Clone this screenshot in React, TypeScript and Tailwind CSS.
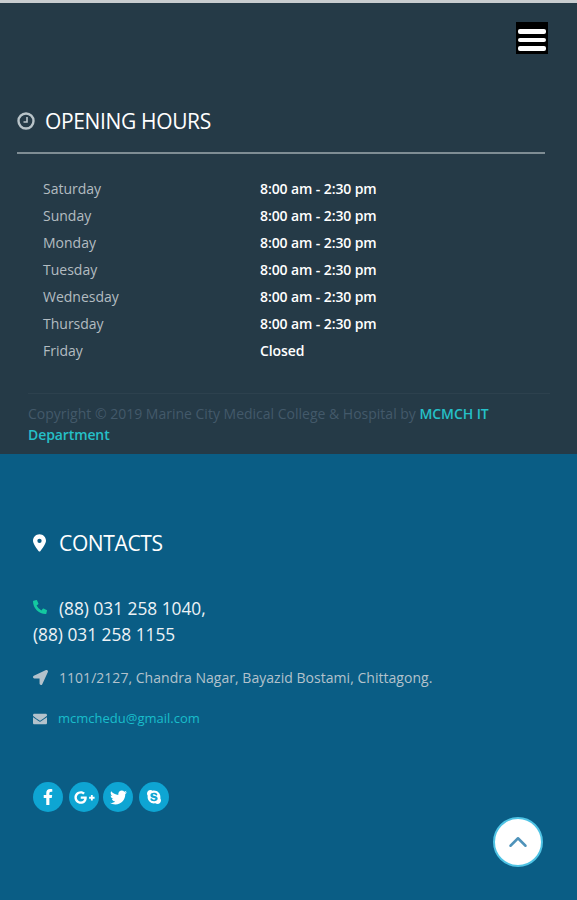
import { FaEnvelope, FaFacebookF, FaGooglePlusG, FaLocationArrow, FaPhoneAlt, FaSkype, FaTwitter } from 'react-icons/fa'
import { FaLocationDot } from 'react-icons/fa6'
import { LuChevronUp } from 'react-icons/lu'

const hours = [
  ['Saturday', '8:00 am - 2:30 pm'],
  ['Sunday', '8:00 am - 2:30 pm'],
  ['Monday', '8:00 am - 2:30 pm'],
  ['Tuesday', '8:00 am - 2:30 pm'],
  ['Wednesday', '8:00 am - 2:30 pm'],
  ['Thursday', '8:00 am - 2:30 pm'],
  ['Friday', 'Closed'],
]

const socials = [
  { icon: <FaFacebookF className="h-[16px] w-[16px]" />, cls: 'mr-[6px]' },
  { icon: <FaGooglePlusG className="h-[21px] w-[21px]" />, cls: 'mr-[4px]' },
  { icon: <FaTwitter className="h-[17px] w-[17px]" />, cls: 'mr-[6px]' },
  { icon: <FaSkype className="h-[16px] w-[16px]" />, cls: '' },
]

export default function App() {
  return (
    <div className="h-[900px] w-full overflow-hidden bg-[#0a5d85] font-['Open_Sans',sans-serif]">
      <div className="h-[3px] bg-[#c9cdd0]" />

      <section className="h-[451px] bg-[#253a47] pt-[19px]">
        <div className="flex justify-end pr-[29px]">
          <button className="flex h-[32px] w-[32px] flex-col items-center justify-center gap-[4px] bg-black pt-[4px]">
            <span className="h-[4.5px] w-[28px] rounded-[2px] bg-white" />
            <span className="h-[4.5px] w-[28px] rounded-[2px] bg-white" />
            <span className="h-[4.5px] w-[28px] rounded-[2px] bg-white" />
          </button>
        </div>

        <div className="mt-[51px] ml-[17px] flex h-[32px] items-center gap-[10px]">
          <svg viewBox="0 0 18 18" className="h-[18px] w-[18px] text-[#b9c4c9]" fill="none" stroke="currentColor">
            <circle cx="9" cy="9" r="7.5" strokeWidth="2.4" />
            <path d="M10 5v5H6.5" strokeWidth="1.6" />
          </svg>
          <h3 className="text-[21px] leading-[32px] tracking-[-0.35px] text-white">OPENING HOURS</h3>
        </div>
        <div className="mt-[15px] ml-[17px] h-[2px] w-[528px] bg-[#7f8d94]" />

        <div className="mt-[21px] ml-[43px]">
          {hours.map(([day, time]) => (
            <div key={day} className="flex h-[27px] items-center text-[14px]">
              <span className="w-[217px] text-[#b3bcc1]">{day}</span>
              <span className="font-semibold tracking-[-0.1px] text-white">{time}</span>
            </div>
          ))}
        </div>

        <div className="mt-[29px] mr-[27px] ml-[28px] border-t border-[#2d414e] pt-[9px] text-[14px] leading-[21px] text-[#43596a]">
          Copyright © 2019 Marine City Medical College & Hospital by{' '}
          <span className="font-semibold tracking-[-0.1px] text-[#25c0c8]">MCMCH IT Department</span>
        </div>
      </section>

      <section className="relative pt-[73px] pl-[33px]">
        <div className="flex h-[32px] items-center">
          <FaLocationDot className="h-[20px] w-[13px] text-white" />
          <h3 className="ml-[13px] text-[21px] leading-[32px] tracking-[-0.35px] text-white">CONTACTS</h3>
        </div>

        <div className="mt-[37px] text-[17.3px] leading-[26px] text-[#eef3f6]">
          <FaPhoneAlt className="mr-[12px] inline h-[14px] w-[14px] align-[1px] text-[#14c8a0]" />
          (88) 031 258 1040,
          <br />
          (88) 031 258 1155
        </div>

        <div className="mt-[17px] flex h-[24px] items-center">
          <FaLocationArrow className="h-[15px] w-[15px] text-[#b3c2cc]" />
          <span className="ml-[11px] text-[14px] tracking-[0.03px] text-[#b3c2cc]">1101/2127, Chandra Nagar, Bayazid Bostami, Chittagong.</span>
        </div>

        <div className="mt-[18px] flex h-[24px] items-center">
          <FaEnvelope className="h-[14px] w-[14px] text-[#b3c2cc]" />
          <span className="ml-[11px] text-[13px] text-[#19bdcb]">mcmchedu@gmail.com</span>
        </div>

        <div className="mt-[51px] flex">
          {socials.map((s, i) => (
            <span key={i} className={`flex h-[30px] w-[30px] items-center justify-center rounded-full bg-[#0ea5d3] text-white ${s.cls}`}>
              {s.icon}
            </span>
          ))}
        </div>

        <button className="absolute top-[363px] left-[493px] flex h-[50px] w-[50px] items-center justify-center rounded-full border-2 border-[#4fc3e4] bg-white text-[#4f93ba]">
          <LuChevronUp className="h-[30px] w-[30px]" />
        </button>
      </section>
    </div>
  )
}
